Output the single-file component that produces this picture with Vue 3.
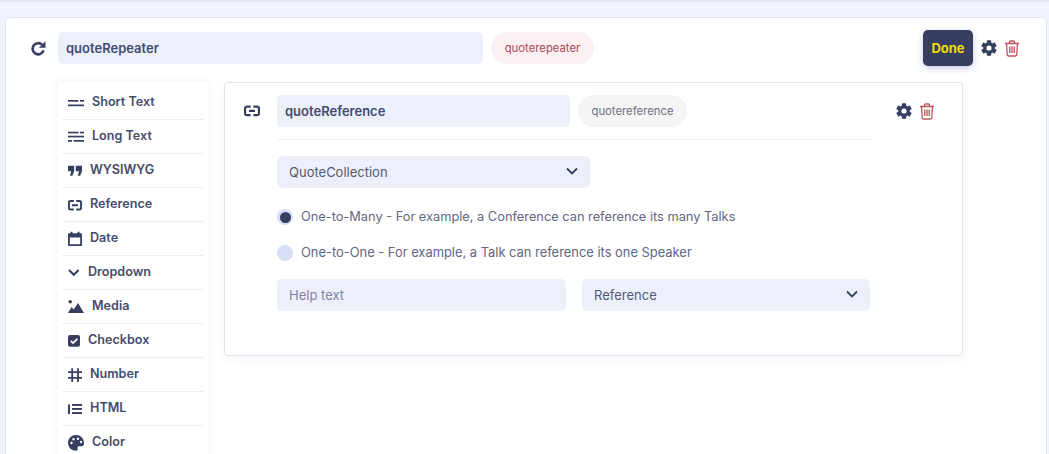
<script setup>
const tools = [
  { name: 'Short Text', icon: 'short', w: 16 },
  { name: 'Long Text', icon: 'long', w: 16 },
  { name: 'WYSIWYG', icon: 'quote', w: 14 },
  { name: 'Reference', icon: 'link', w: 14 },
  { name: 'Date', icon: 'date', w: 14 },
  { name: 'Dropdown', icon: 'chev', w: 12 },
  { name: 'Media', icon: 'media', w: 16 },
  { name: 'Checkbox', icon: 'check', w: 12 },
  { name: 'Number', icon: 'hash', w: 14 },
  { name: 'HTML', icon: 'list', w: 14 },
  { name: 'Color', icon: 'palette', w: 16 }
]

function polar(r, deg) {
  const a = (deg * Math.PI) / 180
  return `${(8 + r * Math.cos(a)).toFixed(2)} ${(8 + r * Math.sin(a)).toFixed(2)}`
}
function buildGear() {
  let d = ''
  for (let i = 0; i < 6; i++) {
    const c = -90 + i * 60
    d += `${i ? 'L' : 'M'}${polar(5.7, c - 24)}L${polar(8, c - 15)}L${polar(8, c + 15)}L${polar(5.7, c + 24)}`
  }
  d += 'ZM8 5.4A2.6 2.6 0 1 0 8 10.6 2.6 2.6 0 0 0 8 5.4Z'
  return d
}
const gearPath = buildGear()
const trashPath = 'M1 3.5h14M5.5 3.5V2a1 1 0 0 1 1-1h3a1 1 0 0 1 1 1v1.5M2.5 3.5l.7 11a1.5 1.5 0 0 0 1.5 1.5h6.6a1.5 1.5 0 0 0 1.5-1.5l.7-11M5.8 6.5v6.5M8 6.5v6.5M10.2 6.5v6.5'
const linkPath = 'M6.6 3.6H3a2 2 0 0 0-2 2v4.6a2 2 0 0 0 2 2h3.600M9.400 3.600H13a2 2 0 0 1 2 2v4.600a2 2 0 0 1-2 2H9.400M5 7.900h6'
</script>

<template>
  <div class="page">
    <div class="topline"></div>
    <section class="card">
      <header class="head">
        <svg class="reload" width="16" height="16" viewBox="0 0 16 16">
          <path d="M12.200 4.800A5.600 5.600 0 1 0 13.600 10.400" fill="none" stroke="#373f60" stroke-width="2.600" />
          <path d="M15.500 1.200V7.800H8.900Z" fill="#373f60" />
        </svg>
        <div class="field name wide">quoteRepeater</div>
        <div class="pill pink">quoterepeater</div>
        <div class="spacer"></div>
        <button class="done">Done</button>
        <svg class="gear" width="16" height="16" viewBox="0 0 16 16"><path :d="gearPath" fill="#373f60" fill-rule="evenodd" /></svg>
        <svg class="trash" width="16" height="17" viewBox="0 0 16 17"><path :d="trashPath" fill="none" stroke="#c0515b" stroke-width="1.300" /></svg>
      </header>

      <div class="body">
        <aside class="tools">
          <div v-for="t in tools" :key="t.name" class="tool">
            <svg :width="t.w" height="16" :viewBox="`0 0 ${t.w} 16`" class="tool-icon">
              <g v-if="t.icon === 'short'" fill="#373f60"><rect y="5" width="10.500" height="1.700" /><rect x="12" y="5" width="4" height="1.700" /><rect y="9.500" width="16" height="1.700" /></g>
              <g v-else-if="t.icon === 'long'" fill="#373f60"><rect y="2.700" width="10.500" height="1.700" /><rect x="12" y="2.700" width="4" height="1.700" /><rect y="6.700" width="16" height="1.700" /><rect y="11" width="4" height="1.700" /><rect x="5.500" y="11" width="10.500" height="1.700" /></g>
              <path v-else-if="t.icon === 'quote'" d="M0 2.800h6.200v5.200l-1.800 4.800H2l1.200-4.500H0ZM7.800 2.800h6.200v5.200l-1.800 4.800H9.800l1.200-4.500H7.800Z" fill="#373f60" />
              <path v-else-if="t.icon === 'link'" d="M5.800 3.900H2.500A1.600 1.600 0 0 0 .9 5.500v5.400A1.600 1.600 0 0 0 2.500 12.500h3.300M8.200 3.900h3.300a1.600 1.600 0 0 1 1.600 1.600v5.400a1.600 1.600 0 0 1-1.600 1.600H8.200M4 8.200h6" fill="none" stroke="#373f60" stroke-width="2" />
              <path v-else-if="t.icon === 'date'" d="M2.500.7h2V2.200h5V.7h2V2.200H13a1 1 0 0 1 1 1V14a1 1 0 0 1-1 1H1a1 1 0 0 1-1-1V3.200a1 1 0 0 1 1-1h1.500ZM1.800 6.600V13.200h10.400V6.600Z" fill="#373f60" fill-rule="evenodd" />
              <path v-else-if="t.icon === 'chev'" d="M1 5l4.800 4.800L10.600 5" fill="none" stroke="#373f60" stroke-width="2" />
              <g v-else-if="t.icon === 'media'" fill="#373f60"><circle cx="2.200" cy="2.800" r="1.800" /><path d="M0 14l3.500-6 2.200 2.500L10 4l6 10Z" /></g>
              <g v-else-if="t.icon === 'check'"><rect y="2" width="12" height="11.700" rx="2" fill="#373f60" /><path d="M2.800 7.800l2.300 2.300 4.200-4.200" fill="none" stroke="#fff" stroke-width="1.700" /></g>
              <path v-else-if="t.icon === 'hash'" d="M4.200 1.300V15M10 1.300V15M0 5.200H14M0 10.800H14" fill="none" stroke="#373f60" stroke-width="1.800" />
              <g v-else-if="t.icon === 'list'" fill="#373f60"><rect y="3.500" width="2" height="9.500" /><rect x="4" y="3" width="10" height="1.900" /><rect x="4" y="7" width="10" height="1.900" /><rect x="4" y="11.100" width="10" height="1.900" /></g>
              <g v-else>
                <path d="M8 0C3.500 0 0 3.400 0 7.800S3.500 15.800 8 15.800c1.500 0 2-1 1.500-2.200-.5-1.300.3-2.300 1.700-2.300h2.300c1.600 0 2.500-1.200 2.500-3C16 3.500 12.500 0 8 0Z" fill="#373f60" />
                <g fill="#fff"><circle cx="3.500" cy="8" r="1.200" /><circle cx="5.500" cy="4.200" r="1.200" /><circle cx="10" cy="3.700" r="1.200" /><circle cx="13" cy="7" r="1.200" /></g>
              </g>
            </svg>
            <span>{{ t.name }}</span>
          </div>
        </aside>

        <div class="panel">
          <div class="panel-icon">
            <svg width="16" height="16" viewBox="0 0 16 16"><path :d="linkPath" fill="none" stroke="#373f60" stroke-width="2.200" /></svg>
          </div>
          <div class="panel-main">
            <div class="panel-head">
              <div class="field name ref">quoteReference</div>
              <div class="pill grey">quotereference</div>
            </div>
            <div class="field select coll">
              <span>QuoteCollection</span>
              <svg class="chev" width="12" height="8" viewBox="0 0 12 8"><path d="M1 1.500l5 5 5-5" fill="none" stroke="#373f60" stroke-width="1.800" /></svg>
            </div>
            <label class="radio-row first"><span class="radio on"><i></i></span><span>One-to-Many - For example, a Conference can reference its many Talks</span></label>
            <label class="radio-row second"><span class="radio"></span><span>One-to-One - For example, a Talk can reference its one Speaker</span></label>
            <div class="pair">
              <div class="field help">Help text</div>
              <div class="field select type">
                <span>Reference</span>
                <svg class="chev" width="12" height="8" viewBox="0 0 12 8"><path d="M1 1.500l5 5 5-5" fill="none" stroke="#373f60" stroke-width="1.800" /></svg>
              </div>
            </div>
          </div>
          <div class="panel-actions">
            <svg width="16" height="16" viewBox="0 0 16 16"><path :d="gearPath" fill="#373f60" fill-rule="evenodd" /></svg>
            <svg width="16" height="17" viewBox="0 0 16 17"><path :d="trashPath" fill="none" stroke="#c0515b" stroke-width="1.300" /></svg>
          </div>
        </div>
      </div>
    </section>
  </div>
</template>

<style scoped>
.page {
  width: 1049px;
  height: 454px;
  overflow: hidden;
  background: #f0f2fc;
  font-family: Inter, "Noto Sans", sans-serif;
  color: #373f60;
  box-sizing: border-box;
}
.topline {
  height: 2px;
  background: #e4e6f0;
}
.card {
  margin: 15px 2px 0 5px;
  height: 500px;
  background: #fff;
  border: 1px solid #e4e5ec;
  border-radius: 5px;
  box-sizing: border-box;
}
.head {
  display: flex;
  align-items: center;
  height: 36px;
  margin-top: 12px;
  padding-left: 24px;
}
.reload { margin-right: 12px; }
.field {
  height: 32px;
  background: #edf0fb;
  border-radius: 5px;
  display: flex;
  align-items: center;
  box-sizing: border-box;
  font-size: 13px;
}
.name {
  padding-left: 8px;
  font-weight: 600;
  font-size: 13px;
  color: #454c6b;
}
.wide { width: 425px; }
.pill {
  height: 32px;
  border-radius: 16px;
  margin-left: 8px;
  display: flex;
  align-items: center;
  justify-content: center;
  font-size: 11.300px;
}
.pink { width: 103px; background: #fbf0f2; color: #a9485a; }
.grey { width: 109px; background: #f5f4f4; color: #71717f; }
.spacer { flex: 1; }
.done {
  width: 50px;
  height: 36px;
  border: 0;
  border-radius: 5px;
  background: #373f60;
  color: #f5d90a;
  font: 700 13px Inter, sans-serif;
  box-shadow: 0 2px 6px rgba(70, 80, 170, .3);
  padding: 0;
}
.gear { margin-left: 8px; }
.trash { margin: 0 26px 0 7px; }
.body {
  display: flex;
  align-items: flex-start;
  gap: 16px;
  margin-top: 16px;
  padding-left: 52px;
}
.tools {
  width: 150px;
  flex: none;
  padding: 4px 4px 0;
  box-sizing: border-box;
  background: #fff;
  box-shadow: 0 0 10px rgba(70, 80, 150, .08);
}
.tool {
  height: 34px;
  display: flex;
  align-items: center;
  gap: 8px;
  padding: 0 6px;
  border-bottom: 1px solid #eceef5;
  box-sizing: border-box;
  font-size: 12.600px;
  font-weight: 600;
  color: #454c6b;
}
.tool span { position: relative; top: -1px; }
.tool-icon { flex: none; }
.panel {
  width: 739px;
  height: 274px;
  flex: none;
  display: flex;
  background: #fff;
  border: 1px solid #e2e3e8;
  border-radius: 4px;
  box-sizing: border-box;
  box-shadow: 0 4px 12px rgba(70, 80, 150, .06);
}
.panel-icon {
  width: 52px;
  padding: 20px 0 0 19px;
  box-sizing: border-box;
  flex: none;
}
.panel-main {
  width: 593px;
  flex: none;
  padding-top: 12px;
}
.panel-head {
  display: flex;
  padding-bottom: 12px;
  border-bottom: 1px solid #f0f0f4;
  margin-bottom: 16px;
}
.ref { width: 293px; }
.select {
  justify-content: space-between;
  padding: 0 12px;
  color: #545a74;
}
.chev { margin-bottom: 2px; }
.coll { width: 313px; }
.radio-row {
  display: flex;
  align-items: center;
  gap: 8px;
  height: 16px;
  margin-top: 20px;
  font-size: 12.800px;
  color: #62677f;
}
.second { font-size: 12.900px; }
.radio-row span:last-child { position: relative; top: -1px; }
.first { margin-top: 21px; }
.radio {
  width: 16px;
  height: 16px;
  border-radius: 50%;
  background: #d8def5;
  display: flex;
  align-items: center;
  justify-content: center;
}
.radio i {
  width: 11px;
  height: 11px;
  border-radius: 50%;
  background: #373f60;
}
.pair {
  display: flex;
  gap: 16px;
  margin-top: 18px;
}
.help {
  width: 289px;
  padding-left: 12px;
  color: #7d84a4;
}
.type { width: 288px; }
.panel-actions {
  display: flex;
  gap: 7px;
  padding: 20px 0 0 26px;
  align-items: flex-start;
}
</style>
